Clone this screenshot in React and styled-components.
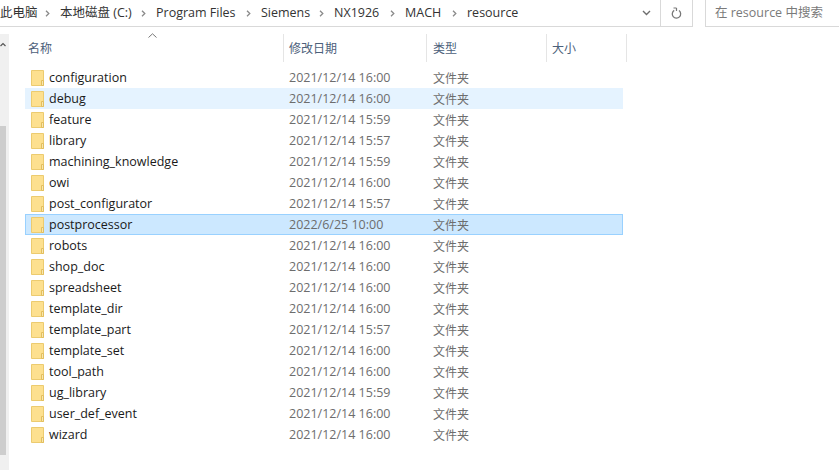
import React from "react";
import styled, { createGlobalStyle } from "styled-components";

const GlobalStyle = createGlobalStyle`
  html, body {
    margin: 0;
    padding: 0;
    background: #fff;
  }
  body {
    width: 839px;
    height: 470px;
    overflow: hidden;
    font-family: "Noto Sans CJK SC", "Liberation Sans", sans-serif;
  }
`;

const Window = styled.div`
  width: 839px;
  height: 470px;
  display: flex;
  flex-direction: column;
  overflow: hidden;
  background: #fff;
  color: #1a1a1a;
`;

const TopBar = styled.div`
  height: 27px;
  display: flex;
  align-items: flex-start;
  flex-shrink: 0;
`;

const AddressBox = styled.div`
  width: 693px;
  height: 27px;
  box-sizing: border-box;
  border-bottom: 1px solid #d9d9d9;
  border-right: 1px solid #d9d9d9;
  display: flex;
  align-items: center;
`;

const Crumbs = styled.div`
  flex: 1;
  display: flex;
  align-items: center;
  height: 22px;
  font-family: "Open Sans", "Noto Sans CJK SC", sans-serif;
  font-size: 12.5px;
  color: #333;
  white-space: nowrap;
  overflow: hidden;
`;

const Crumb = styled.span`
  width: ${(p) => p.$w}px;
  flex-shrink: 0;
  line-height: 22px;
`;

const Sep = styled.svg`
  width: 5px;
  height: 7px;
  flex-shrink: 0;
  margin: 0 10px;
`;

const Dropdown = styled.svg`
  width: 9px;
  height: 6px;
  margin-right: 9px;
`;

const RefreshCell = styled.div`
  width: 31px;
  height: 26px;
  border-left: 1px solid #d9d9d9;
  display: flex;
  align-items: center;
  justify-content: center;
`;

const SearchBox = styled.div`
  width: 134px;
  height: 27px;
  box-sizing: border-box;
  margin-left: 12px;
  border-left: 1px solid #d9d9d9;
  border-bottom: 1px solid #d9d9d9;
  padding-left: 9px;
  font-family: "Open Sans", "Noto Sans CJK SC", sans-serif;
  font-size: 12.5px;
  line-height: 25px;
  color: #7a7a7a;
  white-space: nowrap;
`;

const Body = styled.div`
  flex: 1;
  display: flex;
  min-height: 0;
  padding-top: 7px;
`;

const Rail = styled.div`
  width: 9px;
  background: #f0f0f0;
  display: flex;
  flex-direction: column;
`;

const RailArrow = styled.svg`
  width: 6px;
  height: 5px;
  margin-top: 8px;
`;

const RailThumb = styled.div`
  width: 6px;
  height: 329px;
  margin-top: 79px;
  background: #cdcdcd;
`;

const Main = styled.div`
  padding-left: 16px;
  flex: 1;
`;

const Header = styled.div`
  position: relative;
  display: flex;
  height: 28px;
`;

const SortCaret = styled.svg`
  position: absolute;
  left: 123px;
  top: -1px;
  width: 9px;
  height: 5px;
`;

const HeaderCell = styled.div`
  width: ${(p) => p.$w}px;
  box-sizing: border-box;
  padding-left: ${(p) => p.$pad}px;
  border-right: 1px solid #e5e5e5;
  font-size: 12px;
  line-height: 28px;
  color: #4c607a;
`;

const List = styled.div`
  display: flex;
  flex-direction: column;
  margin-top: 5px;
`;

const Row = styled.div`
  width: 598px;
  height: 21px;
  box-sizing: border-box;
  display: flex;
  align-items: center;
  background: ${(p) => (p.$selected ? "#cce8ff" : p.$hover ? "#e5f3ff" : "transparent")};
  outline: ${(p) => (p.$selected ? "1px solid #99d1ff" : "none")};
  outline-offset: -1px;
`;

const FolderIcon = styled.svg`
  width: 14px;
  height: 16px;
  margin-left: 6px;
  flex-shrink: 0;
`;

const Name = styled.span`
  width: 240px;
  margin-left: 4px;
  font-family: "Open Sans", "Liberation Sans", sans-serif;
  font-size: 12.5px;
  color: #1a1a1a;
`;

const Modified = styled.span`
  width: 144px;
  font-family: "Open Sans", "Liberation Sans", sans-serif;
  font-size: 12.5px;
  color: #6d6d6d;
`;

const Kind = styled.span`
  font-size: 12px;
  color: #6d6d6d;
`;

const crumbs = [
  ["此电脑", 35],
  ["本地磁盘 (C:)", 71],
  ["Program Files", 80],
  ["Siemens", 48],
  ["NX1926", 46],
  ["MACH", 37],
];

const columns = [
  ["名称", 259, 3],
  ["修改日期", 143, 5],
  ["类型", 120, 6],
  ["大小", 80, 5],
];

const folders = [
  ["configuration", "2021/12/14 16:00"],
  ["debug", "2021/12/14 16:00"],
  ["feature", "2021/12/14 15:59"],
  ["library", "2021/12/14 15:57"],
  ["machining_knowledge", "2021/12/14 15:59"],
  ["owi", "2021/12/14 16:00"],
  ["post_configurator", "2021/12/14 15:57"],
  ["postprocessor", "2022/6/25 10:00"],
  ["robots", "2021/12/14 16:00"],
  ["shop_doc", "2021/12/14 16:00"],
  ["spreadsheet", "2021/12/14 16:00"],
  ["template_dir", "2021/12/14 16:00"],
  ["template_part", "2021/12/14 15:57"],
  ["template_set", "2021/12/14 16:00"],
  ["tool_path", "2021/12/14 16:00"],
  ["ug_library", "2021/12/14 15:59"],
  ["user_def_event", "2021/12/14 16:00"],
  ["wizard", "2021/12/14 16:00"],
];

const Folder = () => (
  <FolderIcon viewBox="0 0 14 16">
    <path d="M0.5 0.5H12.5V15.5H0.5Z" fill="#fde08f" stroke="#eccb6f" />
    <path d="M10.5 10.5V15.5H12.5V10.5Z" fill="#f8e6ae" stroke="#e3bf5e" />
  </FolderIcon>
);

const Chevron = () => (
  <Sep viewBox="0 0 5 7">
    <path d="M1 0.8L3.8 3.5L1 6.2" fill="none" stroke="#8a8a8a" strokeWidth="1.3" />
  </Sep>
);

export default function App() {
  return (
    <Window>
      <GlobalStyle />
      <TopBar>
        <AddressBox>
          <Crumbs>
            {crumbs.map(([label, w]) => (
              <React.Fragment key={label}>
                <Crumb $w={w}>{label}</Crumb>
                <Chevron />
              </React.Fragment>
            ))}
            <Crumb $w={60}>resource</Crumb>
          </Crumbs>
          <Dropdown viewBox="0 0 9 6">
            <path d="M1 1L4.5 4.5L8 1" fill="none" stroke="#6e6e6e" strokeWidth="1.4" />
          </Dropdown>
          <RefreshCell>
            <svg width="11" height="13" viewBox="0 0 11 13">
              <path d="M3.2 3.4A4.2 4.2 0 1 0 8 3.6" fill="none" stroke="#777" strokeWidth="1.3" />
              <path d="M2.5 1L5.5 1M5.5 1V4" fill="none" stroke="#777" strokeWidth="1.2" />
            </svg>
          </RefreshCell>
        </AddressBox>
        <SearchBox>在 resource 中搜索</SearchBox>
      </TopBar>
      <Body>
        <Rail>
          <RailArrow viewBox="0 0 6 5">
            <path d="M0.5 4L3 1.5L5.5 4" fill="none" stroke="#555" strokeWidth="1.2" />
          </RailArrow>
          <RailThumb />
        </Rail>
        <Main>
          <Header>
            <SortCaret viewBox="0 0 9 5">
              <path d="M0.5 4.5L4.5 0.8L8.5 4.5" fill="none" stroke="#777" />
            </SortCaret>
            {columns.map(([label, w, pad]) => (
              <HeaderCell key={label} $w={w} $pad={pad}>
                {label}
              </HeaderCell>
            ))}
          </Header>
          <List>
            {folders.map(([name, date]) => (
              <Row key={name} $hover={name === "debug"} $selected={name === "postprocessor"}>
                <Folder />
                <Name>{name}</Name>
                <Modified>{date}</Modified>
                <Kind>文件夹</Kind>
              </Row>
            ))}
          </List>
        </Main>
      </Body>
    </Window>
  );
}
